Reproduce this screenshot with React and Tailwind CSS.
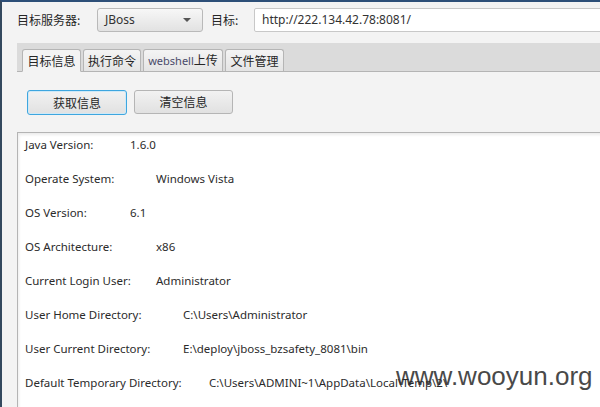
import React from 'react';

const cjk = { fontFamily: '"Noto Sans CJK SC", "Noto Sans", sans-serif' };
const latin = { fontFamily: '"Noto Sans", "Noto Sans CJK SC", sans-serif' };

const rows = [
    { label: 'Java Version:', value: '1.6.0', w: 'w-[105px]' },
    { label: 'Operate System:', value: 'Windows Vista', w: 'w-[131px]' },
    { label: 'OS Version:', value: '6.1', w: 'w-[105px]' },
    { label: 'OS Architecture:', value: 'x86', w: 'w-[131px]' },
    { label: 'Current Login User:', value: 'Administrator', w: 'w-[131px]' },
    { label: 'User Home Directory:', value: 'C:\\Users\\Administrator', w: 'w-[158px]' },
    { label: 'User Current Directory:', value: 'E:\\deploy\\jboss_bzsafety_8081\\bin', w: 'w-[158px]' },
    { label: 'Default Temporary Directory:', value: 'C:\\Users\\ADMINI~1\\AppData\\Local\\Temp\\2\\', w: 'w-[184px]' },
];

const tabs = [
    { name: '目标信息', w: 'w-[59px]' },
    { name: '执行命令', w: 'w-[58px]' },
    { name: 'webshell上传', w: 'w-[80px]' },
    { name: '文件管理', w: 'w-[59px]' },
];

export default function App() {
    return (
        <div className="relative w-[600px] h-[407px] overflow-hidden bg-[#f3f3f3] border-l-2 border-t-2 border-l-[#34495e] border-t-[#2d4f78] text-[#262626]">
            {/* Target row */}
            <div className="flex items-center h-[24px] mt-[6px] pl-[15px]" style={cjk}>
                <span className="shrink-0 w-[80px] text-[12px]">目标服务器:</span>
                <div className="shrink-0 w-[106px] h-[24px] flex items-center justify-between px-[7px] rounded-[3px] border border-[#b9b9b9] bg-gradient-to-b from-[#f7f7f7] to-[#e2e2e2]">
                    <span className="text-[12px] text-[#333]" style={latin}>JBoss</span>
                    <span className="w-0 h-0 mr-[4px] border-l-[4px] border-r-[4px] border-t-[4px] border-l-transparent border-r-transparent border-t-[#555]" />
                </div>
                <span className="shrink-0 ml-[8px] w-[43px] text-[12px]">目标:</span>
                <div className="shrink-0 w-[360px] h-[24px] flex items-center px-[7px] bg-white border border-[#c8c8c8] rounded-[2px]">
                    <span className="text-[12px] text-[#333]" style={latin}>http://222.134.42.78:8081/</span>
                </div>
            </div>

            {/* Tab bar */}
            <div className="ml-[15px] mt-[11px] h-[29px] pt-[6px] pl-[5px] flex items-end gap-[2px] bg-[#dbdbdb] border-b border-[#b4b4b4]" style={cjk}>
                {tabs.map((t, i) => (
                    <div
                        key={t.name}
                        className={`${t.w} shrink-0 h-[23px] -mb-px flex items-center justify-center text-[12px] rounded-t-[3px] border border-[#b5b5b5] ${
                            i === 0
                                ? 'bg-[#f3f3f3] border-b-[#f3f3f3]'
                                : 'bg-gradient-to-b from-[#f4f4f4] to-[#e4e4e4] border-b-[#b4b4b4]'
                        }`}
                    >
                        {t.name === 'webshell上传' ? (
                            <span><span className="text-[11px] text-[#4a4a6a]" style={latin}>webshell</span>上传</span>
                        ) : t.name}
                    </div>
                ))}
            </div>

            {/* Buttons */}
            <div className="flex items-start gap-[7px] pl-[25px] pt-[18px]" style={cjk}>
                <button className="w-[100px] h-[25px] text-[12px] rounded-[3px] border border-[#3ea6df] bg-gradient-to-b from-[#f2f2f2] to-[#e1e1e1] shadow-[inset_0_0_0_1px_#cfe9f7]">
                    获取信息
                </button>
                <button className="w-[99px] h-[24px] text-[12px] rounded-[3px] border border-[#b5b5b5] bg-gradient-to-b from-[#f2f2f2] to-[#e1e1e1]">
                    清空信息
                </button>
            </div>

            {/* Output area */}
            <div className="ml-[15px] mt-[17px] w-[600px] h-[300px] bg-white border-t border-l border-[#b4b4b4] shadow-[inset_1px_2px_3px_rgba(0,0,0,0.08)] pl-[7px] pt-[4px]" style={latin}>
                <div className="flex flex-col gap-[18px]">
                    {rows.map(r => (
                        <div key={r.label} className="flex leading-4 text-[11.5px] text-[#2b2b2b] whitespace-nowrap">
                            <span className={`${r.w} shrink-0`}>{r.label}</span>
                            <span>{r.value}</span>
                        </div>
                    ))}
                </div>
            </div>

            {/* Watermark */}
            <div
                className="absolute left-[394px] top-[361px] text-[26px] leading-none text-[#2a2a2a] opacity-85"
                style={{ fontFamily: '"Liberation Sans", Arial, sans-serif' }}
            >
                www.wooyun.org
            </div>
        </div>
    );
}
